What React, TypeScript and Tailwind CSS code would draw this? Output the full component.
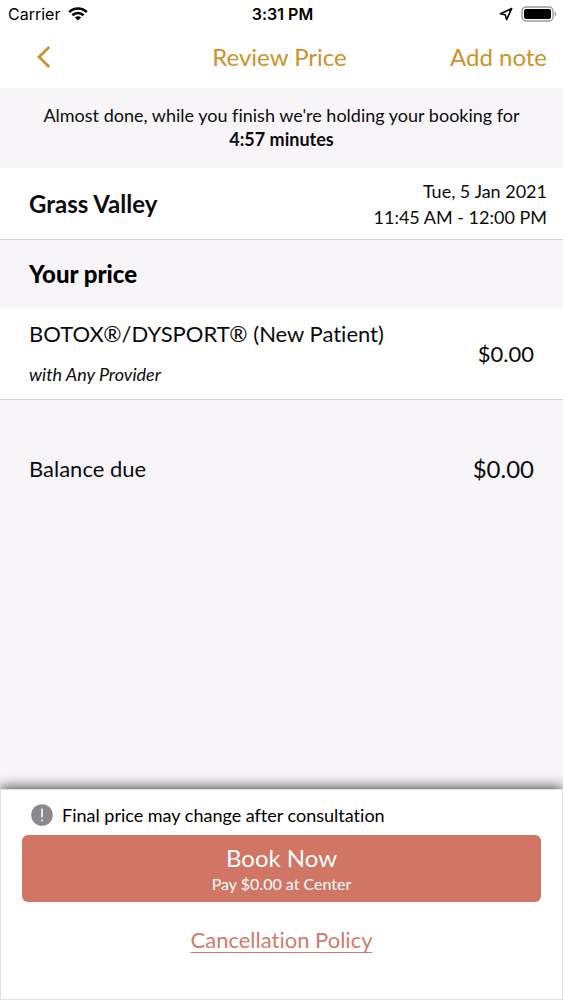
function StatusBar() {
  return (
    <div className="grid h-7 grid-cols-[1fr_auto_1fr] items-center pr-1.5 pl-2 font-['Inter',sans-serif] text-base text-black">
      <div className="flex items-center gap-2">
        <span>Carrier</span>
        <svg width="20" height="14" viewBox="0 0 20 14" aria-hidden="true">
          <g fill="none" stroke="currentColor" strokeWidth="2.6">
            <path d="M1.2 5.1C6.2.2 13.8.2 18.8 5.1" />
            <path d="M4.4 8.3C7.5 5.3 12.5 5.3 15.6 8.3" />
          </g>
          <path d="M6.9 10.5C8.7 8.9 11.3 8.9 13.1 10.5L10 13.6Z" fill="currentColor" />
        </svg>
      </div>
      <span className="text-center font-semibold">3:31 PM</span>
      <div className="flex items-center justify-end gap-2">
        <svg width="14" height="14" viewBox="0 0 14 14" aria-hidden="true">
          <path d="M12.6 1.6L1.4 6.8L6.2 7.8L7.6 12.6Z" fill="none" stroke="currentColor" strokeWidth="1.6" strokeLinejoin="round" />
        </svg>
        <svg width="36" height="16" viewBox="0 0 36 16" aria-hidden="true">
          <rect x="1" y="1" width="31" height="14" rx="4" fill="none" stroke="#9b9b9b" strokeWidth="1.4" />
          <rect x="3" y="3" width="27" height="10" rx="2" fill="currentColor" />
          <path d="M33.6 5.5C35.8 6.2 35.8 9.8 33.6 10.5Z" fill="#9b9b9b" />
        </svg>
      </div>
    </div>
  );
}

function NavBar() {
  return (
    <header className="grid h-15 grid-cols-[1fr_auto_1fr] items-center pr-4 pb-0.5 pl-3 text-2xl text-[#cb9329]">
      <button type="button" aria-label="Back" className="ml-5 flex size-6 items-center justify-center">
        <svg width="14" height="22" viewBox="0 0 14 22" aria-hidden="true">
          <path d="M12.3 1L2 11L12.3 21" fill="none" stroke="currentColor" strokeWidth="2.8" />
        </svg>
      </button>
      <h1>Review Price</h1>
      <button type="button" className="justify-self-end">Add note</button>
    </header>
  );
}

export default function App() {
  return (
    <div className="flex min-h-screen flex-col bg-[#f7f5f8] font-['Lato',sans-serif] text-[#0c0c0e] [font-variant-ligatures:none]">
      <div className="bg-white">
        <StatusBar />
        <NavBar />
      </div>
      <p className="h-20 px-6 pt-[15px] text-center text-lg leading-6">
        Almost done, while you finish we're holding your booking for
        <strong className="block">4:57 minutes</strong>
      </p>

      <section className="flex h-18 items-center justify-between border-b border-[#d6d6d8] bg-white pr-4 pl-[29px]">
        <h2 className="text-2xl font-bold">Grass Valley</h2>
        <div className="text-right text-lg leading-[26px]">
          <p>Tue, 5 Jan 2021</p>
          <p>11:45 AM - 12:00 PM</p>
        </div>
      </section>

      <h2 className="flex h-17 items-center pl-[29px] text-2xl font-black text-black">Your price</h2>

      <section className="flex h-23 items-center justify-between border-b border-[#d6d6d8] bg-white px-[29px]">
        <div>
          <p className="text-[22px] leading-8">BOTOX®/DYSPORT® (New Patient)</p>
          <p className="pt-2 text-lg leading-8 italic">with Any Provider</p>
        </div>
        <p className="text-[22px] leading-8">$0.00</p>
      </section>

      <section className="flex items-center justify-between px-[29px] pt-[53px] text-[22px] leading-8">
        <p>Balance due</p>
        <p className="text-2xl">$0.00</p>
      </section>

      <footer className="mt-auto border border-[#e0e0e2] bg-white px-[21px] pt-[13px] pb-[43px] shadow-[0_-2px_12px_#000000b0]">
        <div className="flex items-center gap-2 pl-2 text-lg leading-6 text-black">
          <svg width="24" height="24" viewBox="0 0 24 24" aria-hidden="true">
            <circle cx="12" cy="12" r="10.8" fill="#8b898d" />
            <path d="M12 5.6V14.4M12 16.4V18.2" stroke="#fff" strokeWidth="1.6" />
          </svg>
          <p>Final price may change after consultation</p>
        </div>
        <button type="button" className="mt-2 flex w-full flex-col items-center rounded-md bg-[#d17565] pt-[9px] pb-1.5 text-white">
          <span className="text-2xl leading-7">Book Now</span>
          <span className="text-base leading-6">Pay $0.00 at Center</span>
        </button>
        <div className="pt-[22px] text-center">
          <a href="#cancellation-policy" className="text-[22px] leading-8 text-[#d17b6f] underline decoration-1 underline-offset-4">Cancellation Policy</a>
        </div>
      </footer>
    </div>
  );
}
